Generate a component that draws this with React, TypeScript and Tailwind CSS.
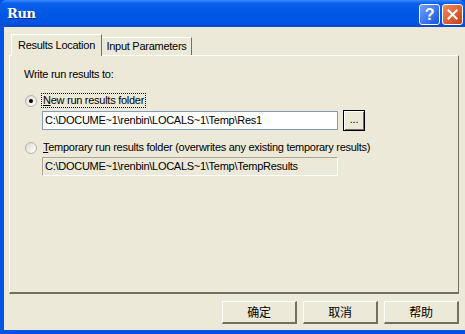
import { ReactElement } from "react";

const ui = { fontFamily: '"Liberation Sans", Arial, sans-serif' };
const cjk = { fontFamily: '"Noto Sans CJK SC", "Liberation Sans", sans-serif' };

function Radio({ checked }: { checked?: boolean }): ReactElement {
  return (
    <span className="relative w-[12px] h-[12px] rounded-full bg-gradient-to-br from-[#dcdcd5] to-white border border-[#b5b3a8] flex items-center justify-center shrink-0">
      {checked && <span className="w-[4px] h-[4px] rounded-full bg-black" />}
    </span>
  );
}

function DialogButton({ label }: { label: string }): ReactElement {
  return (
    <button
      className="w-[75px] h-[23px] bg-[#ece9d8] border-t border-l border-t-white border-l-white border-b-2 border-r-2 border-b-[#716f64] border-r-[#716f64] text-[12px] text-black flex items-center justify-center"
      style={cjk}
    >
      {label}
    </button>
  );
}

export default function App(): ReactElement {
  return (
    <div className="w-[465px] h-[334px] flex flex-col bg-[#0054e3] overflow-hidden tracking-[-0.27px]" style={ui}>
      <div className="h-[27px] shrink-0 flex items-center justify-between pl-[7px] pr-[2px] bg-[linear-gradient(180deg,#3a8cff_0%,#0b61ec_12%,#0058e6_50%,#0054e3_85%,#0049c9_100%)] rounded-t-[6px]">
        <span className="text-white font-bold text-[13px] tracking-tight [text-shadow:1px_1px_0_#0a2a8a]" style={{ fontFamily: '"DejaVu Serif", serif' }}>
          Run
        </span>
        <div className="flex gap-[2px] mt-[2px]">
          <span className="w-[21px] h-[21px] rounded-[3px] border border-white bg-gradient-to-br from-[#6fa0ff] to-[#1650d8] text-white font-bold text-[16px] leading-none flex items-center justify-center">
            ?
          </span>
          <span className="w-[21px] h-[21px] rounded-[3px] border border-white bg-gradient-to-br from-[#f08a5c] to-[#c63a0f] flex items-center justify-center">
            <svg width="11" height="11" viewBox="0 0 11 11">
              <path d="M1.5 1.5 L9.5 9.5 M9.5 1.5 L1.5 9.5" stroke="white" strokeWidth="2" strokeLinecap="square" />
            </svg>
          </span>
        </div>
      </div>

      <div className="flex-1 ml-[4px] mb-[4px] bg-[#ece9d8] flex flex-col pl-[5px] pr-[6px] pt-[6px]">
        <div className="flex items-end h-[22px] pl-[2px]">
          <div className="h-[22px] w-[91px] bg-[#ece9d8] border-t border-l border-t-white border-l-white border-r border-r-[#716f64] relative z-10 -mb-px flex items-center justify-center text-[11px] text-black">
            Results Location
          </div>
          <div className="h-[18px] w-[90px] border-t border-r border-t-white border-r-[#716f64] flex items-center justify-center text-[11px] text-black">
            Input Parameters
          </div>
        </div>

        <div className="h-[239px] border-t border-l border-t-white border-l-white border-r border-b-2 border-r-[#716f64] border-b-[#716f64] flex flex-col pl-[14px] pt-[12px]">
          <div className="text-[11px] text-black leading-[13px]">Write run results to:</div>

          <div className="flex items-center gap-[5px] mt-[13px] ml-[1px]">
            <Radio checked />
            <span className="text-[11px] text-black leading-[13px] outline-1 outline-dotted outline-black px-px">
              <span className="underline">N</span>ew run results folder
            </span>
          </div>
          <div className="flex items-center gap-[5px] mt-[3px] ml-[18px]">
            <div className="w-[296px] h-[19px] bg-white border border-[#7f9db9] flex items-center px-[2px] text-[11px] text-black">
              C:\DOCUME~1\renbin\LOCALS~1\Temp\Res1
            </div>
            <button className="w-[22px] h-[21px] bg-[#ece9d8] border border-black shadow-[inset_1px_1px_0_white,inset_-1px_-1px_0_#716f64] text-[11px] leading-none text-black flex items-end justify-center pb-[5px]">
              ...
            </button>
          </div>

          <div className="flex items-center gap-[5px] mt-[10px] ml-[1px]">
            <Radio />
            <span className="text-[11px] text-black leading-[13px] px-px">
              <span className="underline">T</span>emporary run results folder (overwrites any existing temporary results)
            </span>
          </div>
          <div className="mt-[3px] ml-[18px] w-[296px] h-[19px] bg-[#ece9d8] border border-t-[#aca899] border-l-[#aca899] border-b-white border-r-white flex items-center px-[2px] text-[11px] text-black">
            C:\DOCUME~1\renbin\LOCALS~1\Temp\TempResults
          </div>
        </div>

        <div className="flex justify-end gap-[6px] mt-[7px]">
          <DialogButton label="确定" />
          <DialogButton label="取消" />
          <DialogButton label="帮助" />
        </div>
      </div>
    </div>
  );
}
